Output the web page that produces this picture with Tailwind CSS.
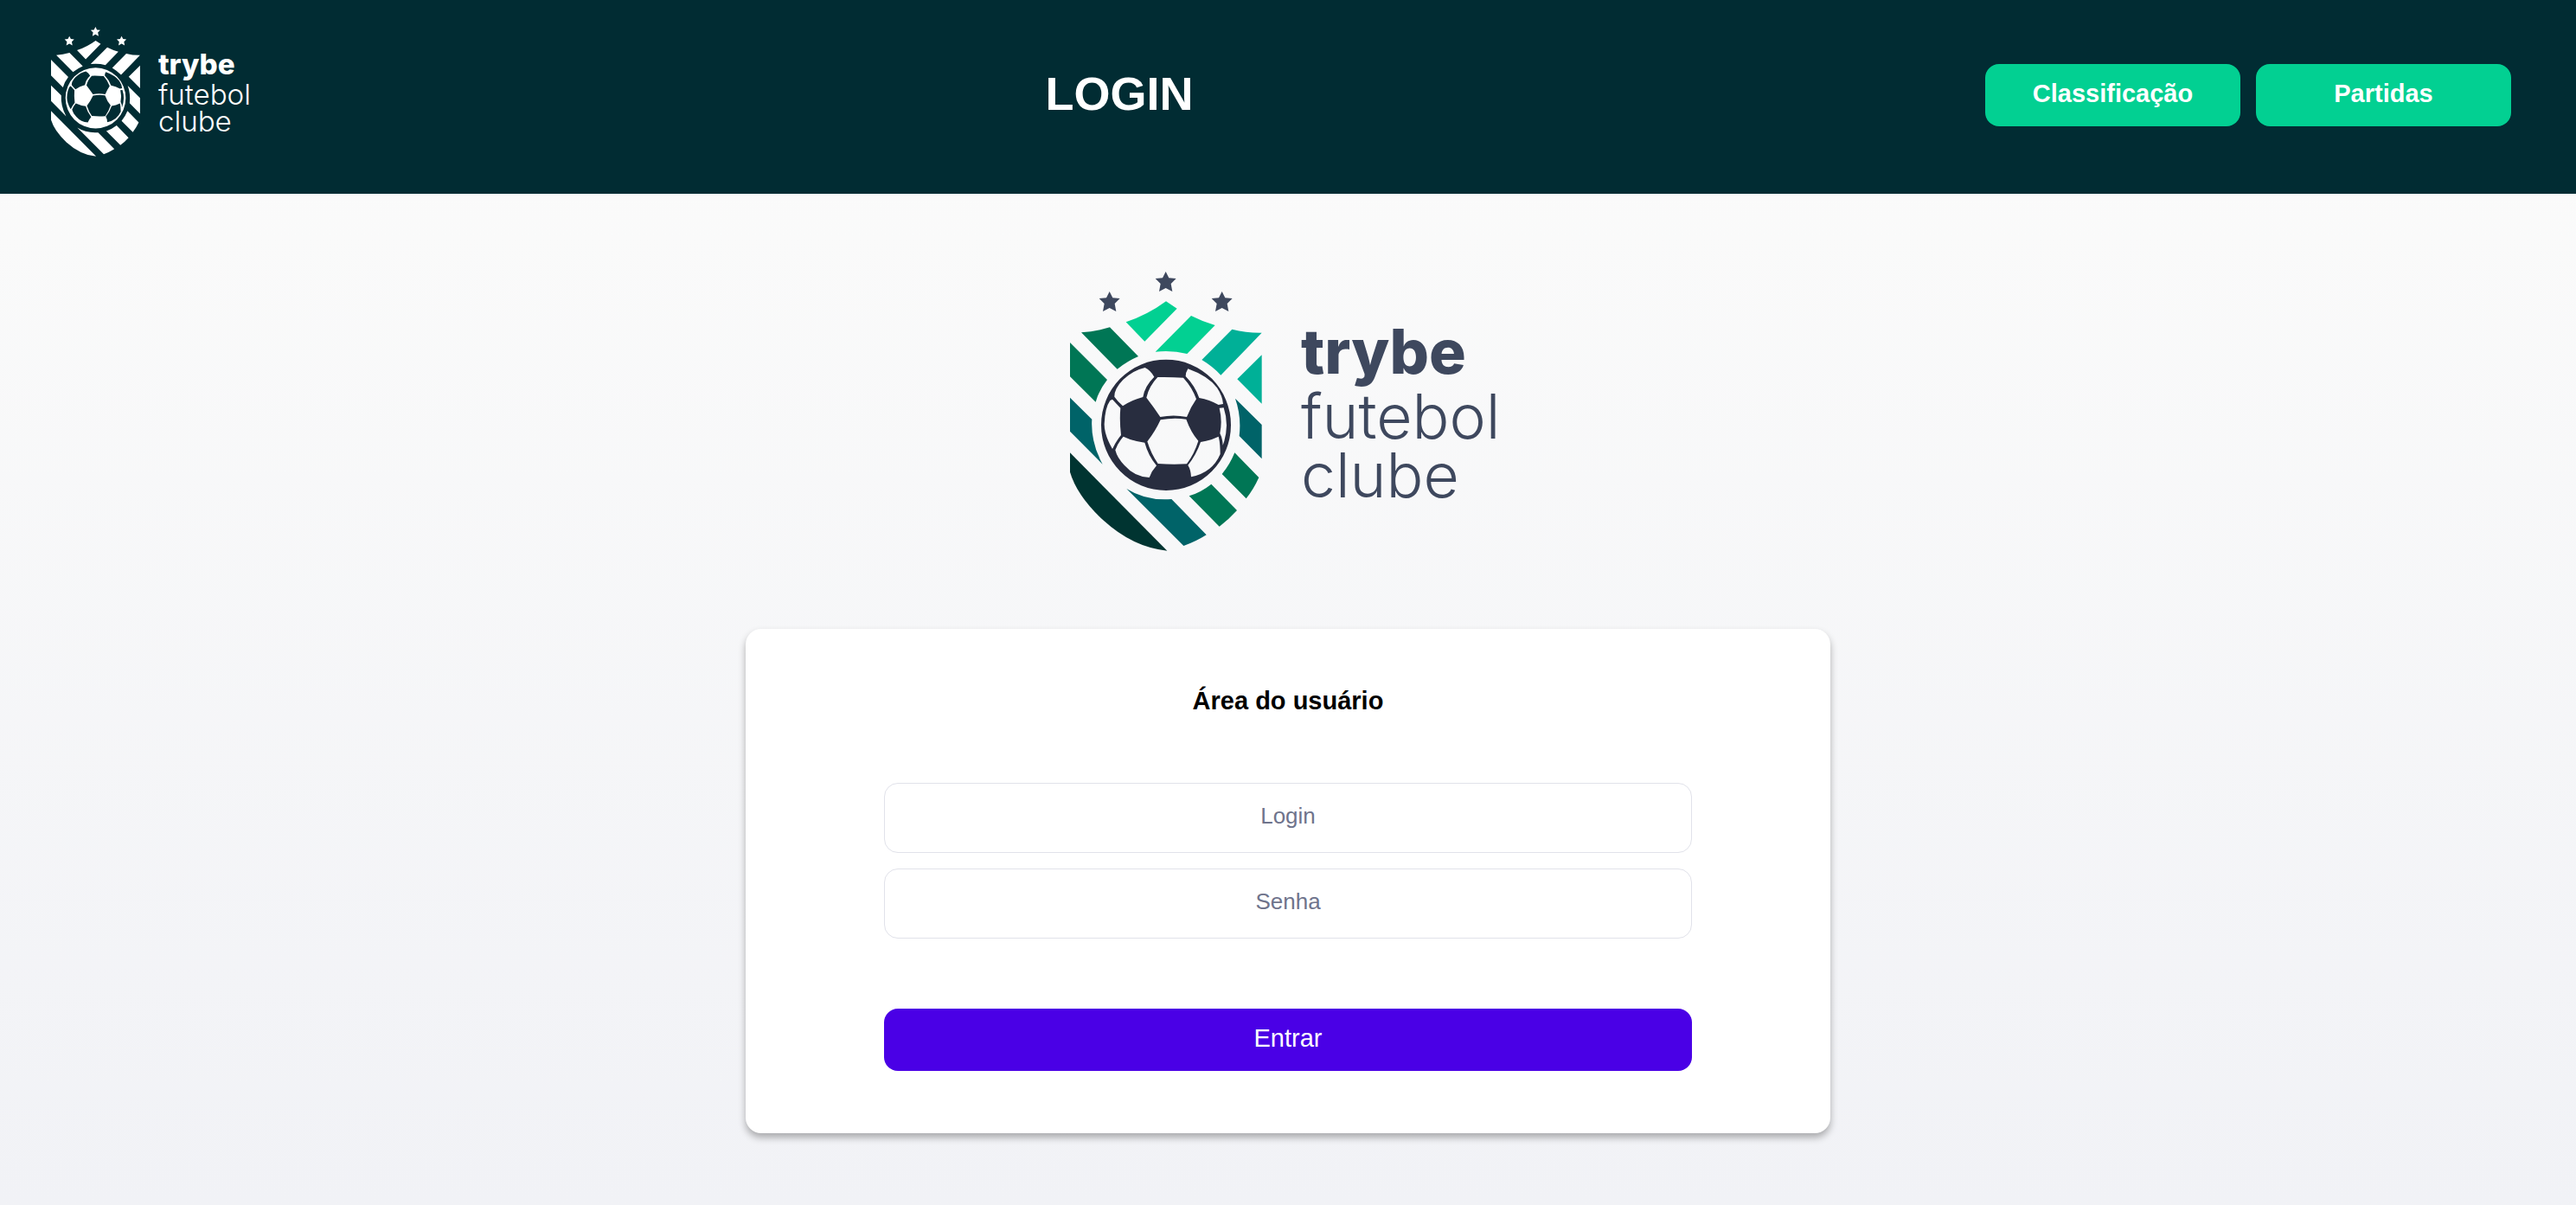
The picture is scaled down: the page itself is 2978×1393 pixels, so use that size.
<!DOCTYPE html>
<html lang="pt-BR">
<head>
<meta charset="UTF-8">
<meta name="viewport" content="width=device-width, initial-scale=1">
<title>Trybe Futebol Clube</title>
<script src="https://cdn.jsdelivr.net/npm/@tailwindcss/browser@4"></script>
</head>
<body class="flex min-h-screen flex-col bg-linear-to-b from-[#fcfcfb] to-[#f1f2f6] font-['Liberation_Sans',Arial,sans-serif]">

<!-- Crest geometry shared by the coloured and the white logo -->
<svg class="hidden" aria-hidden="true">
  <defs>
    <path id="star" d="M383 43 L394 65 L419 67 L401 85 L406 112 L383 100 L360 112 L365 85 L347 67 L372 65 Z"/>
    <g id="stars"><use href="#star"/><use href="#star" x="-195" y="69"/><use href="#star" x="195" y="69"/></g>
    <path id="mint" d="M245 218 Q320 193 384 146 L422 171 L310 285 Z M471 196 Q510 216 554 229 L457 328 Q402 314 347 321 Z"/>
    <path id="aqua" d="M613 243 Q664 256 716 255 L574 402 Q545 371 508 349 Z M716 332 L631 416 L716 501 Z"/>
    <path id="green" d="M90 254 Q140 251 189 236 L288 337 Q250 353 215 381 Z M51 289 L180 418 Q151 455 140 495 L51 407 Z M622 671 L706 757 Q688 797 662 830 L578 745 Q605 713 622 671 Z M541 780 L630 871 Q602 902 569 927 L464 821 Q506 808 541 780 Z"/>
    <path id="petrol" d="M51 480 L127 555 Q122 635 164 711 L51 597 Z M624 483 L716 574 V692 L638 613 Q646 545 624 483 Z M247 796 Q315 839 403 832 L524 956 Q486 980 445 994 Z"/>
    <path id="deep" d="M51 671 L388 1011 Q270 1000 166 905 Q75 820 51 738 Z"/>
    <path id="ball" fill-rule="evenodd" d="M159 575 A225 227 0 1 1 609 575 A225 227 0 1 1 159 575 Z
      M355 409 Q400 408 444 411 Q475 445 489 485 Q470 512 456 547 Q410 538 364 547 Q343 515 316 480 Q325 440 355 409 Z
      M365 557 Q410 548 454 555 Q470 600 496 630 Q482 675 456 710 Q405 713 356 709 Q332 675 319 632 Q345 600 365 557 Z
      M311 376 Q330 385 343 408 Q310 440 304 478 Q265 488 234 509 Q218 495 205 477 Q204 450 235 418 Q270 385 311 376 Z
      M460 380 Q530 405 561 446 Q580 475 582 502 L566 505 Q535 487 499 481 Q485 440 452 406 Q452 393 460 380 Z
      M198 486 L226 516 Q222 560 228 610 Q210 632 198 658 Q170 610 170 572 Q172 515 190 490 Z
      M569 516 L584 515 Q594 545 594 576 Q593 615 581 645 Q580 620 571 604 Q580 560 569 516 Z
      M236 615 Q272 632 310 636 Q322 680 351 716 Q335 733 326 757 Q275 755 240 715 Q215 690 208 662 Q218 635 236 615 Z
      M504 634 Q535 630 566 615 Q572 635 572 676 Q545 740 471 755 Q470 730 460 714 Q488 680 504 634 Z"/>
  </defs>
</svg>

<header class="flex items-center justify-between bg-[#012c33] pt-[31px] pr-[75px] pb-[35px] pl-[59px] text-white">
  <svg class="mb-2 h-[150px] w-[234px] fill-white font-['Inter',sans-serif]" viewBox="51 43 1512 969" role="img" aria-label="Trybe Futebol Clube">
    <use href="#stars"/><use href="#mint"/><use href="#aqua"/><use href="#green"/><use href="#petrol"/><use href="#deep"/><use href="#ball"/>
    <text x="852" y="398" class="text-[214px] font-extrabold">trybe</text>
    <text x="852" y="623" class="text-[214px] font-light">futebol</text>
    <text x="852" y="825" class="text-[214px] font-light">clube</text>
  </svg>
  <h1 class="pb-1 text-[54px] leading-[60px] font-bold">LOGIN</h1>
  <nav class="flex gap-[18px]">
    <button type="button" class="h-[72px] w-[295px] rounded-[16px] bg-[#02d092] pb-1 text-[29px] leading-[32px] font-bold">Classificação</button>
    <button type="button" class="h-[72px] w-[295px] rounded-[16px] bg-[#02d092] pb-1 text-[29px] leading-[32px] font-bold">Partidas</button>
  </nav>
</header>

<main class="flex grow flex-col items-center gap-[90px] px-6 pt-[90px] pb-[83px]">
  <svg class="h-[323px] w-[504px] font-['Inter',sans-serif]" viewBox="51 43 1512 969" role="img" aria-label="Trybe Futebol Clube">
    <use href="#stars" class="fill-[#3e485e]"/>
    <use href="#mint" class="fill-[#02d092]"/>
    <use href="#aqua" class="fill-[#00b097]"/>
    <use href="#green" class="fill-[#007655]"/>
    <use href="#petrol" class="fill-[#006368]"/>
    <use href="#deep" class="fill-[#003431]"/>
    <use href="#ball" class="fill-[#282d3f]"/>
    <g class="fill-[#3e485e]">
      <text x="852" y="398" class="text-[214px] font-extrabold">trybe</text>
      <text x="852" y="623" class="text-[214px] font-light">futebol</text>
      <text x="852" y="825" class="text-[214px] font-light">clube</text>
    </g>
  </svg>

  <form class="flex w-full max-w-[1254px] flex-col rounded-[18px] bg-white px-40 pt-[67px] pb-[72px] shadow-[0_5px_8px_rgba(0,0,0,0.3)]">
    <h2 class="mb-[79px] text-center text-[29px] leading-[32px] font-bold text-black">Área do usuário</h2>
    <div class="flex flex-col gap-[18px]">
      <input type="text" aria-label="Login" placeholder="Login" class="h-[81px] rounded-[16px] border border-[#e1e2ea] px-6 pb-1 text-center text-[26px] leading-[32px] text-[#6f748c] placeholder:text-[#6f748c]">
      <input type="password" aria-label="Senha" placeholder="Senha" class="h-[81px] rounded-[16px] border border-[#e1e2ea] px-6 pb-1 text-center text-[26px] leading-[32px] text-[#6f748c] placeholder:text-[#6f748c]">
    </div>
    <button type="submit" class="mt-[81px] h-[72px] rounded-[16px] bg-[#4a00e6] pb-1 text-[29px] leading-[32px] text-white">Entrar</button>
  </form>
</main>
</body>
</html>
